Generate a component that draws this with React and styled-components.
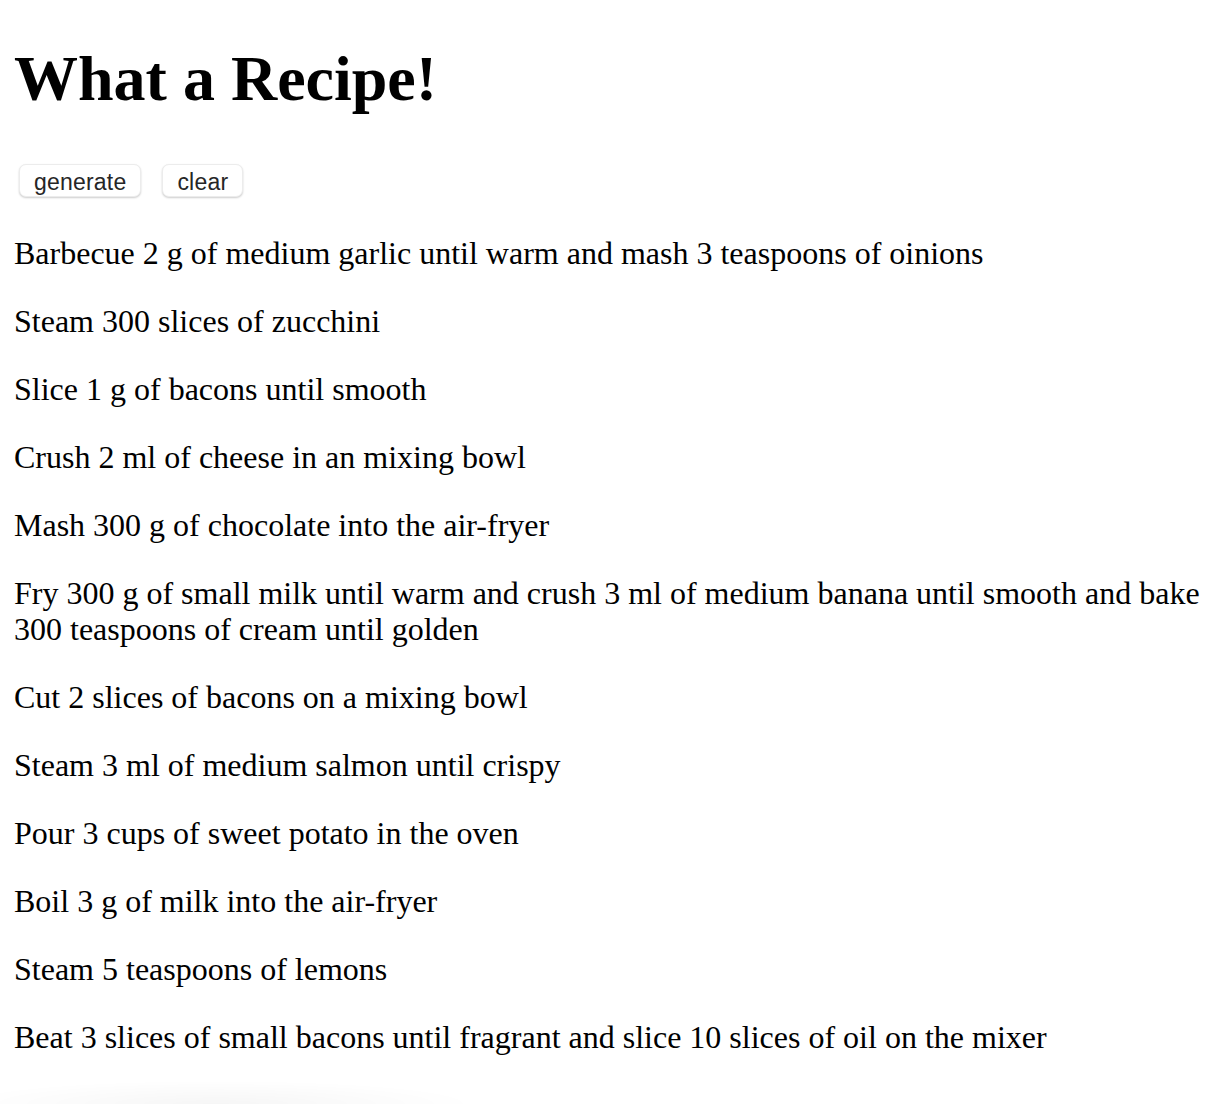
import React, { useState } from "react";
import styled, { createGlobalStyle } from "styled-components";

const GlobalStyle = createGlobalStyle`
  html, body {
    margin: 0;
    padding: 0;
    background: #fff;
  }
  body {
    font-family: "Liberation Serif", "Times New Roman", serif;
    color: #000;
  }
`;

const steps = [
  "Barbecue 2 g of medium garlic until warm and mash 3 teaspoons of oinions",
  "Steam 300 slices of zucchini",
  "Slice 1 g of bacons until smooth",
  "Crush 2 ml of cheese in an mixing bowl",
  "Mash 300 g of chocolate into the air-fryer",
  "Fry 300 g of small milk until warm and crush 3 ml of medium banana until smooth and bake 300 teaspoons of cream until golden",
  "Cut 2 slices of bacons on a mixing bowl",
  "Steam 3 ml of medium salmon until crispy",
  "Pour 3 cups of sweet potato in the oven",
  "Boil 3 g of milk into the air-fryer",
  "Steam 5 teaspoons of lemons",
  "Beat 3 slices of small bacons until fragrant and slice 10 slices of oil on the mixer",
];

const Page = styled.div`
  padding: 0 14px;
`;

const Title = styled.h1`
  font-size: 64px;
  font-weight: bold;
  line-height: 74px;
  margin: 42px 0 48px;
`;

const Toolbar = styled.div`
  display: flex;
  gap: 21px;
  padding-left: 5px;
  margin-bottom: 38px;
`;

const Button = styled.button`
  font-family: "Helvetica Neue", "Liberation Sans", Arial, sans-serif;
  font-size: 23px;
  letter-spacing: 0.2px;
  color: #262626;
  background: #fff;
  border: 1px solid #ececec;
  border-radius: 7px;
  box-shadow: 0 1px 2px rgba(0, 0, 0, 0.2);
  height: 33px;
  padding: 3px 14px 0;
  cursor: pointer;
`;

const Step = styled.p`
  font-size: 32px;
  line-height: 36px;
  margin: 0 0 32px;
`;

const Shade = styled.div`
  position: fixed;
  left: 0;
  bottom: 0;
  width: 480px;
  height: 24px;
  background: radial-gradient(ellipse at 45% 100%, rgba(0, 0, 0, 0.035), rgba(0, 0, 0, 0) 70%);
  pointer-events: none;
`;

export default function App() {
  const [list, setList] = useState(steps);
  return (
    <Page>
      <GlobalStyle />
      <Title>What a Recipe!</Title>
      <Toolbar>
        <Button onClick={() => setList(steps)}>generate</Button>
        <Button onClick={() => setList([])}>clear</Button>
      </Toolbar>
      {list.map((s, i) => (
        <Step key={i}>{s}</Step>
      ))}
      <Shade />
    </Page>
  );
}
